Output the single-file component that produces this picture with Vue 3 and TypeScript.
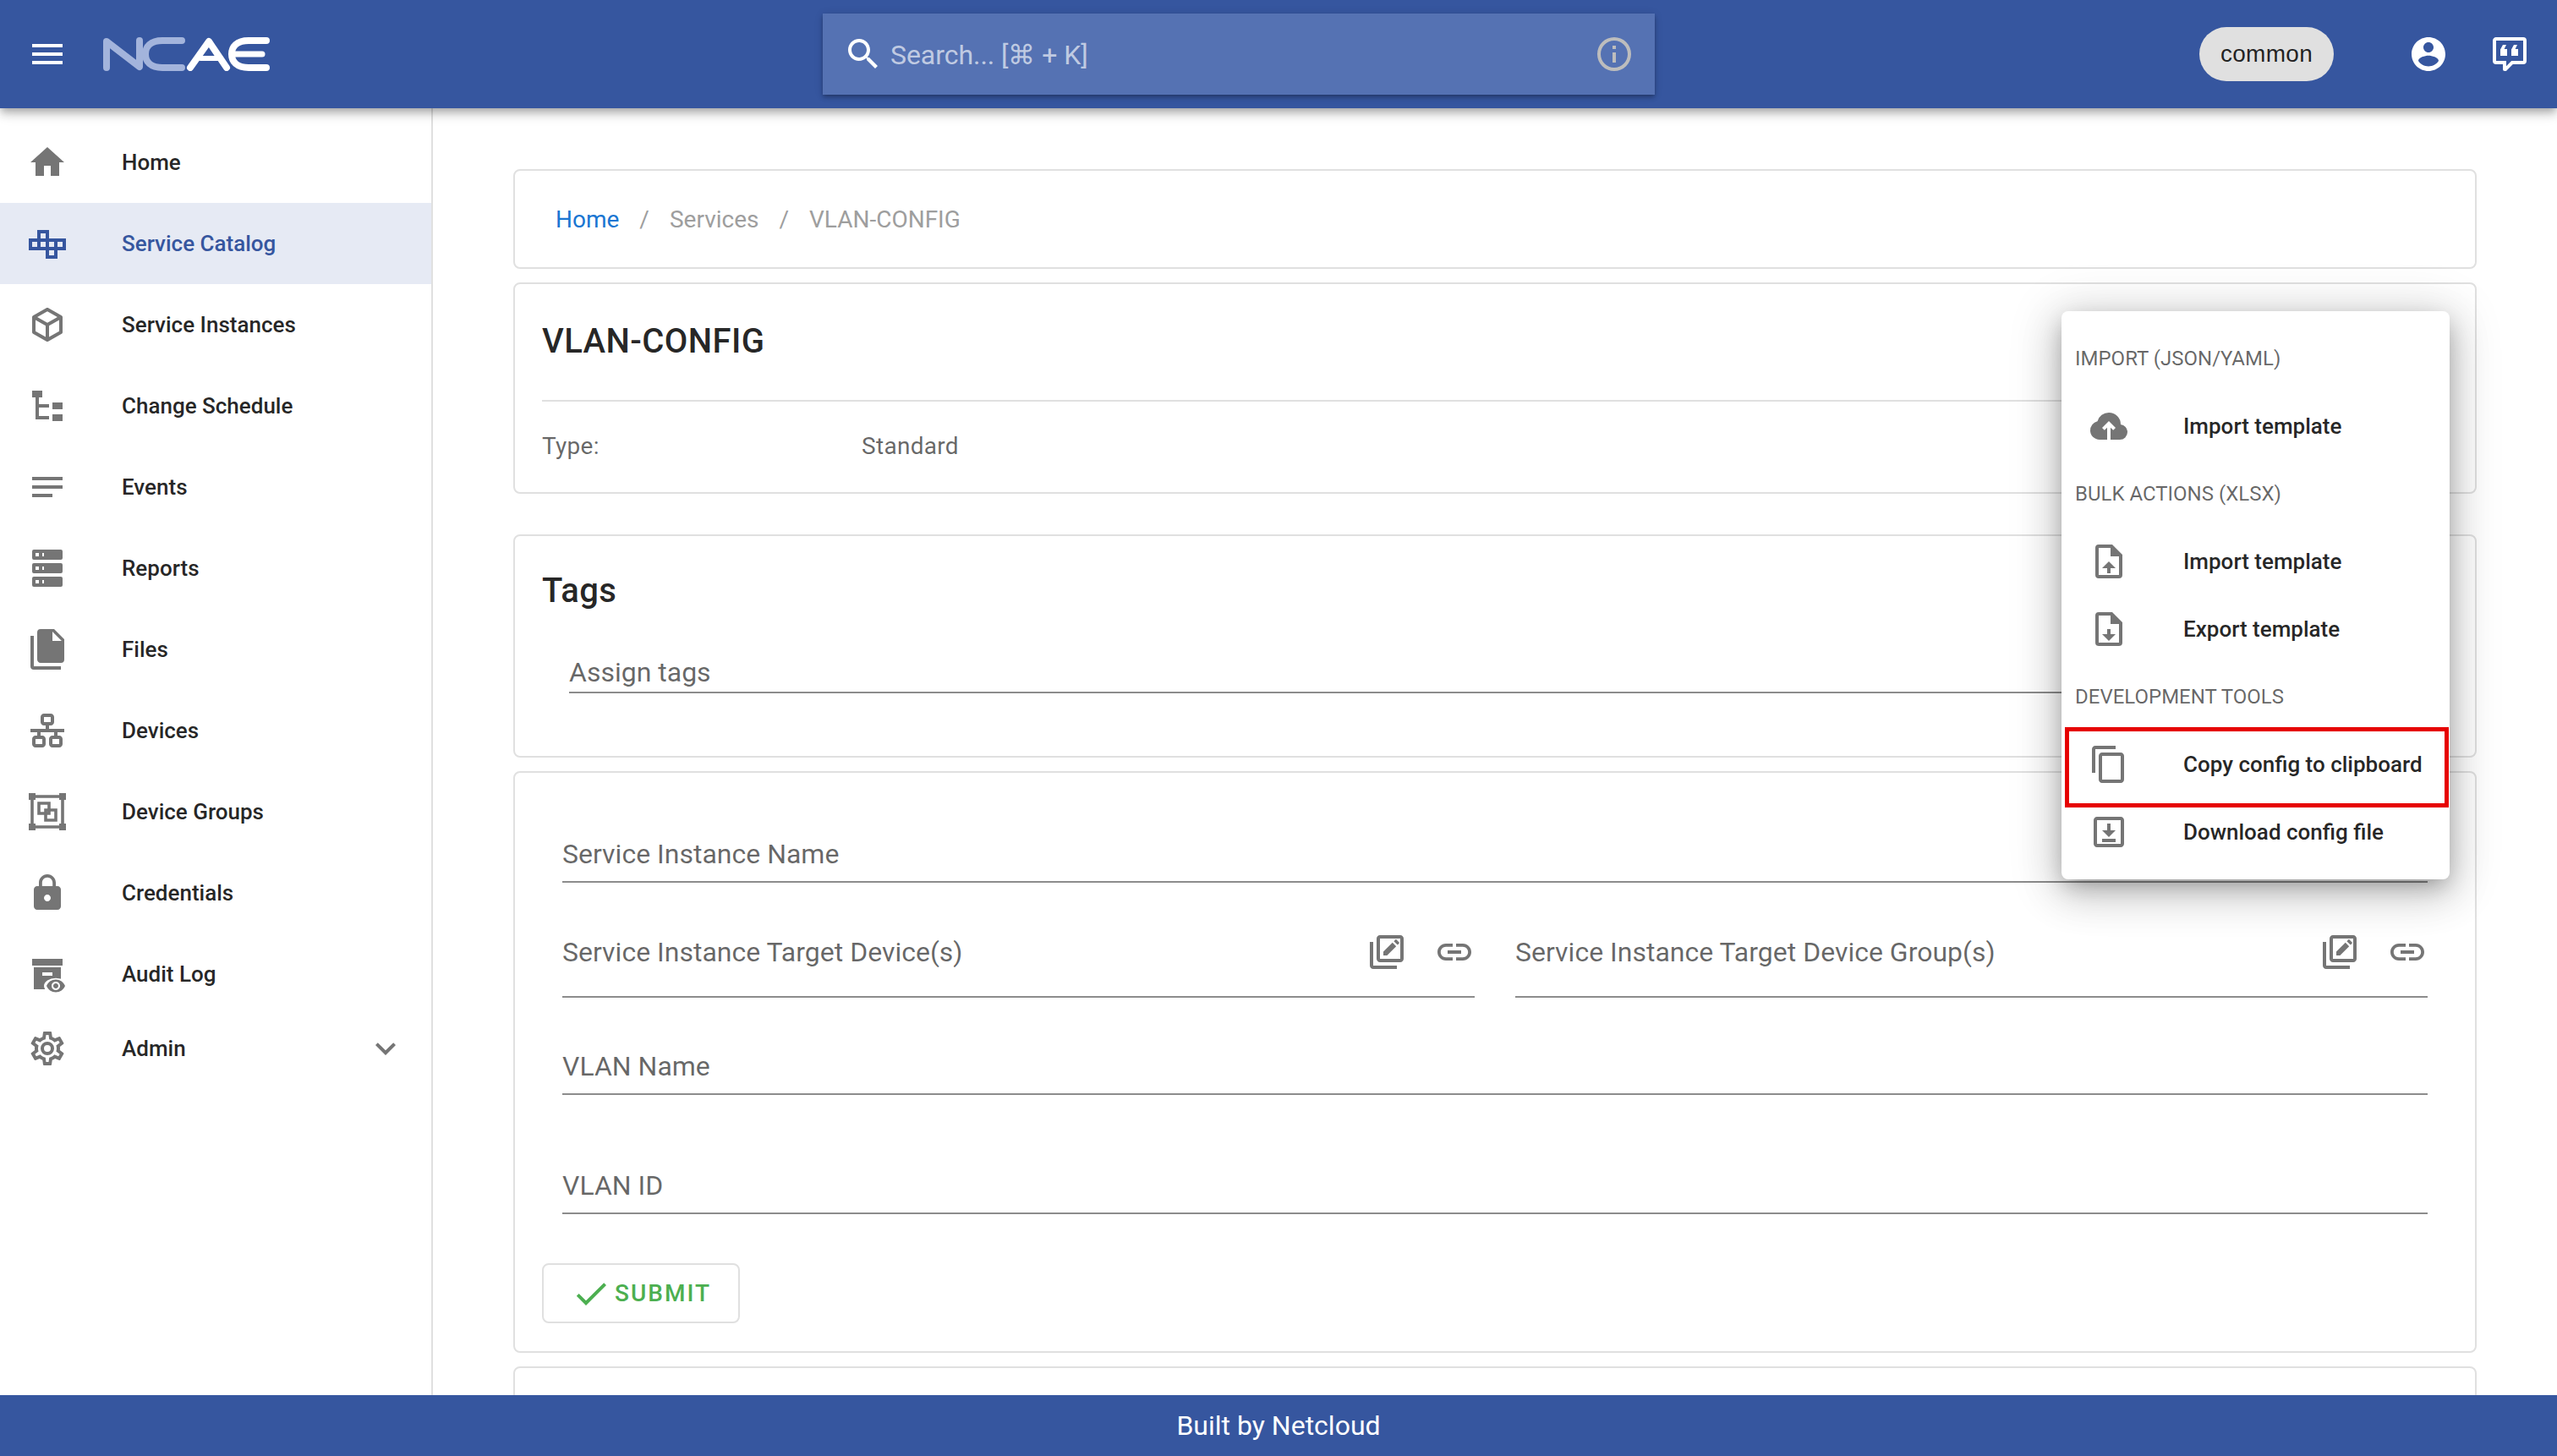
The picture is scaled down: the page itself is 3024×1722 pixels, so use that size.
<script setup lang="ts">
interface NavItem {
  key: string
  label: string
  path?: string
  active?: boolean
  expand?: boolean
}

interface MenuItem {
  label: string
  path: string
  highlight?: boolean
}

interface MenuGroup {
  title: string
  items: MenuItem[]
}

const arrowUp = 'M12 12l-4 4h3v3h2v-3h3z'
const arrowDown = 'M12 19l4-4h-3v-3h-2v3H8z'
const fileOutline = 'M14 2H6a2 2 0 0 0-2 2v16a2 2 0 0 0 2 2h12a2 2 0 0 0 2-2V8zM18 20H6V4h7v5h5z'

const navItems: NavItem[] = [
  { key: 'home', label: 'Home', path: 'M10 20v-6h4v6h5v-8h3L12 3 2 12h3v8z' },
  { key: 'catalog', label: 'Service Catalog', active: true },
  {
    key: 'instances',
    label: 'Service Instances',
    path: 'M21,16.5C21,16.88 20.79,17.21 20.47,17.38L12.57,21.82C12.41,21.94 12.21,22 12,22C11.79,22 11.59,21.94 11.43,21.82L3.53,17.38C3.21,17.21 3,16.88 3,16.5V7.5C3,7.12 3.21,6.79 3.53,6.62L11.43,2.18C11.59,2.06 11.79,2 12,2C12.21,2 12.41,2.06 12.57,2.18L20.47,6.62C20.79,6.79 21,7.12 21,7.5V16.5M12,4.15L6.04,7.5L12,10.85L17.96,7.5L12,4.15M5,15.91L11,19.29V12.58L5,9.21V15.91M19,15.91V9.21L13,12.58V19.29L19,15.91Z'
  },
  {
    key: 'schedule',
    label: 'Change Schedule',
    path: 'M3 3h6v4H3zM5 7h2v4h6v2H7v5h6v2H5zM15 10h6v4h-6zM15 17h6v4h-6z'
  },
  { key: 'events', label: 'Events', path: 'M3 18h12v-2H3v2zM3 6v2h18V6H3zm0 7h18v-2H3v2z' },
  {
    key: 'reports',
    label: 'Reports',
    path: 'M4 1h16a1 1 0 0 1 1 1v4a1 1 0 0 1-1 1H4a1 1 0 0 1-1-1V2a1 1 0 0 1 1-1zM5 3v2h2V3zM9 3v2h1V3zM4 9h16a1 1 0 0 1 1 1v4a1 1 0 0 1-1 1H4a1 1 0 0 1-1-1v-4a1 1 0 0 1 1-1zM5 11v2h2v-2zM9 11v2h1v-2zM4 17h16a1 1 0 0 1 1 1v4a1 1 0 0 1-1 1H4a1 1 0 0 1-1-1v-4a1 1 0 0 1 1-1zM5 19v2h2v-2zM9 19v2h1v-2z'
  },
  {
    key: 'files',
    label: 'Files',
    path: 'M15,7H20.5L15,1.5V7M8,0H16L22,6V18A2,2 0 0,1 20,20H8C6.89,20 6,19.1 6,18V2A2,2 0 0,1 8,0M4,4V22H20V24H4A2,2 0 0,1 2,22V4H4Z'
  },
  {
    key: 'devices',
    label: 'Devices',
    path: 'M10,2C8.89,2 8,2.89 8,4V7C8,8.11 8.89,9 10,9H11V11H2V13H6V15H5C3.89,15 3,15.89 3,17V20C3,21.11 3.89,22 5,22H9C10.11,22 11,21.11 11,20V17C11,15.89 10.11,15 9,15H8V13H16V15H15C13.89,15 13,15.89 13,17V20C13,21.11 13.89,22 15,22H19C20.11,22 21,21.11 21,20V17C21,15.89 20.11,15 19,15H18V13H22V11H13V9H14C15.11,9 16,8.11 16,7V4C16,2.89 15.11,2 14,2H10M10,4H14V7H10V4M5,17H9V20H5V17M15,17H19V20H15V17Z'
  },
  { key: 'groups', label: 'Device Groups' },
  {
    key: 'credentials',
    label: 'Credentials',
    path: 'M18 8h-1V6c0-2.76-2.24-5-5-5S7 3.24 7 6v2H6c-1.1 0-2 .9-2 2v10c0 1.1.9 2 2 2h12c1.1 0 2-.9 2-2V10c0-1.1-.9-2-2-2zm-6 9c-1.1 0-2-.9-2-2s.9-2 2-2 2 .9 2 2-.9 2-2 2zm3.1-9H8.9V6c0-1.71 1.39-3.1 3.1-3.1 1.71 0 3.1 1.39 3.1 3.1v2z'
  },
  { key: 'audit', label: 'Audit Log' },
  {
    key: 'admin',
    label: 'Admin',
    expand: true,
    path: 'M12,8A4,4 0 0,1 16,12A4,4 0 0,1 12,16A4,4 0 0,1 8,12A4,4 0 0,1 12,8M12,10A2,2 0 0,0 10,12A2,2 0 0,0 12,14A2,2 0 0,0 14,12A2,2 0 0,0 12,10M10,22C9.75,22 9.54,21.82 9.5,21.58L9.13,18.93C8.5,18.68 7.96,18.34 7.44,17.94L4.95,18.95C4.73,19.03 4.46,18.95 4.34,18.73L2.34,15.27C2.21,15.05 2.27,14.78 2.46,14.63L4.57,12.97L4.5,12L4.57,11L2.46,9.37C2.27,9.22 2.21,8.95 2.34,8.73L4.34,5.27C4.46,5.05 4.73,4.96 4.95,5.05L7.44,6.05C7.96,5.66 8.5,5.32 9.13,5.07L9.5,2.42C9.54,2.18 9.75,2 10,2H14C14.25,2 14.46,2.18 14.5,2.42L14.87,5.07C15.5,5.32 16.04,5.66 16.56,6.05L19.05,5.05C19.27,4.96 19.54,5.05 19.66,5.27L21.66,8.73C21.79,8.95 21.73,9.22 21.54,9.37L19.43,11L19.5,12L19.43,13L21.54,14.63C21.73,14.78 21.79,15.05 21.66,15.27L19.66,18.73C19.54,18.95 19.27,19.04 19.05,18.95L16.56,17.95C16.04,18.34 15.5,18.68 14.87,18.93L14.5,21.58C14.46,21.82 14.25,22 14,22H10M11.25,4L10.88,6.61C9.68,6.86 8.62,7.5 7.85,8.39L5.44,7.35L4.69,8.65L6.8,10.2C6.4,11.37 6.4,12.64 6.8,13.8L4.68,15.36L5.43,16.66L7.86,15.62C8.63,16.5 9.68,17.14 10.87,17.38L11.24,20H12.76L13.13,17.39C14.32,17.14 15.37,16.5 16.14,15.62L18.57,16.66L19.32,15.36L17.2,13.81C17.6,12.64 17.6,11.37 17.2,10.2L19.31,8.65L18.56,7.35L16.15,8.39C15.38,7.5 14.32,6.86 13.12,6.62L12.75,4H11.25Z'
  }
]

const menuGroups: MenuGroup[] = [
  {
    title: 'IMPORT (JSON/YAML)',
    items: [
      {
        label: 'Import template',
        path: 'M11 20H6.5q-2.28 0-3.89-1.57Q1 16.85 1 14.58q0-1.95 1.17-3.48 1.18-1.53 3.08-1.95.63-2.3 2.5-3.72Q9.63 4 12 4q2.93 0 4.96 2.04Q19 8.07 19 11q1.73.2 2.86 1.5 1.14 1.28 1.14 3 0 1.88-1.31 3.19T18.5 20H13v-7.15l1.6 1.55L16 13l-4-4-4 4 1.4 1.4 1.6-1.55Z'
      }
    ]
  },
  {
    title: 'BULK ACTIONS (XLSX)',
    items: [
      { label: 'Import template', path: fileOutline + arrowUp },
      { label: 'Export template', path: fileOutline + arrowDown }
    ]
  },
  {
    title: 'DEVELOPMENT TOOLS',
    items: [
      {
        label: 'Copy config to clipboard',
        highlight: true,
        path: 'M16 1H4c-1.1 0-2 .9-2 2v14h2V3h12V1zm3 4H8c-1.1 0-2 .9-2 2v14c0 1.1.9 2 2 2h11c1.1 0 2-.9 2-2V7c0-1.1-.9-2-2-2zm0 16H8V7h11v14z'
      },
      {
        label: 'Download config file',
        path: 'M19 3H5C3.9 3 3 3.9 3 5v14c0 1.1.9 2 2 2h14c1.1 0 2-.9 2-2V5C21 3.9 20.1 3 19 3M19 19H5V5h14V19M16 11h-3V7h-2v4H8l4 4zM8 16h8v2H8z'
      }
    ]
  }
]

const editPath =
  'M4 6H2v14c0 1.1.9 2 2 2h14v-2H4V6zM20 2H8c-1.1 0-2 .9-2 2v12c0 1.1.9 2 2 2h12c1.1 0 2-.9 2-2V4c0-1.1-.9-2-2-2zm0 14H8V4h12v12zM10 14v-2.2l5.4-5.4 2.2 2.2-5.4 5.4zM16.2 5.6l.9-.9c.2-.2.5-.2.7 0l1.5 1.5c.2.2.2.5 0 .7l-.9.9z'
const linkPath =
  'M3.9 12c0-1.71 1.39-3.1 3.1-3.1h4V7H7c-2.76 0-5 2.24-5 5s2.24 5 5 5h4v-1.9H7c-1.71 0-3.1-1.39-3.1-3.1zM8 13h8v-2H8v2zm9-6h-4v1.9h4c1.71 0 3.1 1.39 3.1 3.1s-1.39 3.1-3.1 3.1h-4V17h4c2.76 0 5-2.24 5-5s-2.24-5-5-5z'

const targets = ['Service Instance Target Device(s)', 'Service Instance Target Device Group(s)']
</script>

<template>
  <div class="app">
    <header class="topbar">
      <svg class="icon" viewBox="0 0 24 24" fill="#fff"><path d="M3 18h18v-2H3v2zm0-5h18v-2H3v2zm0-7v2h18V6H3z" /></svg>
      <svg class="logo" viewBox="0 0 197 40" fill="none" stroke-width="8" stroke-linecap="round" stroke-linejoin="round">
        <g stroke="#a3b4dc">
          <path d="M4 36V5L43 35V4" />
          <path d="M93 4H70C56 4 50 11 50 20s6 16 20 16H93" />
        </g>
        <g stroke="#fff">
          <path d="M103 36L125 5L146 36" />
          <path d="M115 25H136" stroke-width="6" />
          <path d="M193 4H172C158 4 152 11 152 20s6 16 20 16H193" />
          <path d="M156 20H188" stroke-width="7" />
        </g>
      </svg>
      <div class="search">
        <svg class="icon" viewBox="0 0 24 24" fill="#fff"><path d="M15.5 14h-.79l-.28-.27C15.41 12.59 16 11.11 16 9.5 16 5.91 13.09 3 9.5 3S3 5.91 3 9.5 5.91 16 9.5 16c1.61 0 3.09-.59 4.23-1.57l.27.28v.79l5 4.99L20.49 19l-4.99-5zm-6 0C7.01 14 5 11.99 5 9.5S7.01 5 9.5 5 14 7.01 14 9.5 11.99 14 9.5 14z" /></svg>
        <span class="search-text">Search... [⌘ + K]</span>
        <svg class="icon" viewBox="0 0 24 24" fill="#bdbdbd"><path d="M11,9H13V7H11M12,20C7.59,20 4,16.41 4,12C4,7.59 7.59,4 12,4C16.41,4 20,7.59 20,12C20,16.41 16.41,20 12,20M12,2A10,10 0 0,0 2,12A10,10 0 0,0 12,22A10,10 0 0,0 22,12A10,10 0 0,0 12,2M11,17H13V11H11V17Z" /></svg>
      </div>
      <div class="chip">common</div>
      <svg class="icon user" viewBox="0 0 24 24" fill="#fff"><path d="M12 2C6.48 2 2 6.48 2 12s4.48 10 10 10 10-4.48 10-10S17.52 2 12 2zm0 3c1.66 0 3 1.34 3 3s-1.34 3-3 3-3-1.34-3-3 1.34-3 3-3zm0 14.2c-2.5 0-4.71-1.28-6-3.22.03-1.99 4-3.08 6-3.08 1.99 0 5.97 1.09 6 3.08-1.29 1.94-3.5 3.22-6 3.22z" /></svg>
      <svg class="icon feedback" viewBox="0 0 24 24" fill="#fff"><path d="M9 22a1 1 0 0 1-1-1v-3H4a2 2 0 0 1-2-2V4c0-1.11.9-2 2-2h16a2 2 0 0 1 2 2v12a2 2 0 0 1-2 2h-6.1l-3.7 3.71c-.2.19-.45.29-.7.29zM10 16v3.08L13.08 16H20V4H4v12zM10 6.5L8.8 9H10.5v4H6.5V9.2L8 6.5zM16.5 6.5L15.3 9H17v4h-4V9.2L14.5 6.5z" /></svg>
    </header>

    <div class="body">
      <nav class="sidebar">
        <div
          v-for="item in navItems"
          :key="item.key"
          class="nav-item"
          :class="{ active: item.active, admin: item.expand }"
        >
          <svg class="icon" viewBox="0 0 24 24" fill="currentColor">
            <path v-if="item.path" :d="item.path" fill-rule="evenodd" />
            <path
              v-else-if="item.key === 'catalog'"
              d="M7 5h5v5H7zM2 10h5v5H2zM7 10h5v5H7zM12 10h5v5h-5zM17 10h5v5h-5zM12 15h5v5h-5z"
              fill="none"
              stroke="currentColor"
              stroke-width="2"
            />
            <template v-else-if="item.key === 'groups'">
              <path d="M1 1h4v4H1zM19 1h4v4h-4zM1 19h4v4H1zM19 19h4v4h-4z" />
              <path d="M3 3h18v18H3zM7 7h6v6H7zM11 11h6v6h-6z" fill="none" stroke="currentColor" stroke-width="1.8" />
            </template>
            <template v-else-if="item.key === 'audit'">
              <path d="M3 3h18v4H3zM4 8h16v13H4z" />
              <path d="M9 11h6v2H9z" fill="#fff" />
              <ellipse cx="17" cy="19" rx="7" ry="4.6" fill="#fff" />
              <path transform="translate(11 13) scale(.5)" d="M12 4.5C7 4.5 2.73 7.61 1 12c1.73 4.39 6 7.5 11 7.5s9.27-3.11 11-7.5c-1.73-4.39-6-7.5-11-7.5zM12 17c-2.76 0-5-2.24-5-5s2.24-5 5-5 5 2.24 5 5-2.24 5-5 5zm0-8c-1.66 0-3 1.34-3 3s1.34 3 3 3 3-1.34 3-3-1.34-3-3-3z" />
            </template>
          </svg>
          <span class="nav-label">{{ item.label }}</span>
          <svg v-if="item.expand" class="icon chevron" viewBox="0 0 24 24" fill="currentColor"><path d="M7.41 8.59L12 13.17l4.59-4.58L18 10l-6 6-6-6 1.41-1.41z" /></svg>
        </div>
      </nav>

      <main class="main">
        <div class="page">
          <section class="card crumbs">
            <span class="crumb-link">Home</span>
            <span class="crumb-sep">/</span>
            <span>Services</span>
            <span class="crumb-sep">/</span>
            <span>VLAN-CONFIG</span>
          </section>

          <section class="card summary">
            <h1 class="title">VLAN-CONFIG</h1>
            <div class="summary-row">
              <span class="summary-key">Type:</span>
              <span>Standard</span>
            </div>
          </section>

          <section class="card tags">
            <h2 class="title">Tags</h2>
            <div class="field tag-field">Assign tags</div>
          </section>

          <section class="card form">
            <div class="field">Service Instance Name</div>
            <div class="target-row">
              <div v-for="t in targets" :key="t" class="field target">
                <span>{{ t }}</span>
                <span class="target-icons">
                  <svg class="icon" viewBox="0 0 24 24" fill="#757575"><path :d="editPath" /></svg>
                  <svg class="icon" viewBox="0 0 24 24" fill="#757575"><path :d="linkPath" /></svg>
                </span>
              </div>
            </div>
            <div class="field vlan-name">VLAN Name</div>
            <div class="field vlan-id">VLAN ID</div>
            <button class="submit" type="button">
              <svg class="icon" viewBox="0 0 24 24" fill="#4caf50"><path d="M9 16.17L4.83 12l-1.42 1.41L9 19 21 7l-1.41-1.41z" /></svg>
              SUBMIT
            </button>
          </section>

          <section class="card tail"></section>

          <div class="menu">
            <template v-for="group in menuGroups" :key="group.title">
              <div class="menu-title">{{ group.title }}</div>
              <div v-for="item in group.items" :key="item.label + group.title" class="menu-item">
                <svg class="icon" viewBox="0 0 24 24" fill="#757575"><path :d="item.path" /></svg>
                <span>{{ item.label }}</span>
                <span v-if="item.highlight" class="highlight"></span>
              </div>
            </template>
          </div>
        </div>
      </main>
    </div>

    <footer class="footer">Built by Netcloud</footer>
  </div>
</template>

<style>
html,
body {
  margin: 0;
  background: #fff;
}
</style>

<style scoped>
.app {
  width: 3024px;
  height: 1722px;
  display: flex;
  flex-direction: column;
  overflow: hidden;
  font-family: Roboto, "Liberation Sans", sans-serif;
  color: rgba(0, 0, 0, 0.87);
}

.icon {
  width: 48px;
  height: 48px;
  flex-shrink: 0;
  display: block;
}

.topbar {
  height: 128px;
  flex-shrink: 0;
  display: flex;
  align-items: center;
  padding: 0 32px;
  box-sizing: border-box;
  background: #36569f;
  box-shadow: 0 4px 8px -2px rgba(0, 0, 0, 0.2), 0 8px 10px 0 rgba(0, 0, 0, 0.14), 0 2px 20px 0 rgba(0, 0, 0, 0.12);
  position: relative;
  z-index: 2;
}

.logo {
  width: 197px;
  height: 40px;
  margin-left: 42px;
}

.search {
  width: 984px;
  height: 96px;
  margin-left: 654px;
  padding: 0 24px;
  box-sizing: border-box;
  display: flex;
  align-items: center;
  background: #5572b3;
  box-shadow: 0 2px 4px -1px rgba(0, 0, 0, 0.2), 0 4px 5px 0 rgba(0, 0, 0, 0.14), 0 1px 10px 0 rgba(0, 0, 0, 0.12);
}

.search-text {
  flex: 1;
  margin-left: 8px;
  padding-top: 2px;
  font-size: 32px;
  letter-spacing: -0.05px;
  color: rgba(255, 255, 255, 0.65);
}

.chip {
  margin-left: auto;
  width: 159px;
  height: 64px;
  border-radius: 32px;
  background: #e0e0e0;
  display: flex;
  align-items: center;
  justify-content: center;
  font-family: "Liberation Sans", sans-serif;
  font-size: 28px;
  letter-spacing: 0.3px;
}

.user {
  margin-left: 88px;
}

.feedback {
  margin-left: 48px;
}

.body {
  flex: 1;
  display: flex;
  min-height: 0;
}

.sidebar {
  width: 512px;
  flex-shrink: 0;
  padding-top: 16px;
  box-sizing: border-box;
  border-right: 2px solid #e0e0e0;
}

.nav-item {
  height: 96px;
  display: flex;
  align-items: center;
  gap: 64px;
  padding-left: 32px;
  color: #757575;
}

.nav-item.admin {
  height: 80px;
}

.nav-item.active {
  background: #e6eaf4;
  color: #36569f;
}

.nav-label {
  font-size: 26px;
  font-weight: 500;
  color: rgba(0, 0, 0, 0.87);
}

.active .nav-label {
  color: #36569f;
}

.chevron {
  margin-left: auto;
  margin-right: 30px;
}

.main {
  flex: 1;
  min-width: 0;
  padding: 72px 95px 0;
  overflow: hidden;
}

.page {
  position: relative;
}

.card {
  border: 2px solid #e0e0e0;
  border-radius: 8px;
  box-sizing: border-box;
  margin-bottom: 16px;
}

.crumbs {
  height: 118px;
  display: flex;
  align-items: center;
  padding-left: 48px;
  font-size: 28px;
  color: #9e9e9e;
}

.crumb-link {
  color: #1976d2;
}

.crumb-sep {
  margin: 0 24px;
}

.summary {
  height: 250px;
  padding: 0 32px;
  margin-bottom: 48px;
}

.title {
  margin: 0;
  font-size: 40px;
  font-weight: 500;
  letter-spacing: 0.4px;
  line-height: 48px;
}

.summary .title {
  padding: 44px 0 45px;
  border-bottom: 2px solid #e0e0e0;
}

.summary-row {
  display: flex;
  margin-top: 36px;
  font-size: 28px;
  letter-spacing: 0.3px;
  color: rgba(0, 0, 0, 0.6);
}

.summary-key {
  width: 378px;
}

.tags {
  height: 264px;
  padding: 41px 56px 0 32px;
}

.field {
  height: 66px;
  box-sizing: border-box;
  line-height: 64px;
  font-size: 32px;
  color: rgba(0, 0, 0, 0.6);
  border-bottom: 2px solid #8c8c8c;
}

.tag-field {
  height: 48px;
  line-height: 46px;
  margin: 49px 0 0 32px;
}

.form {
  height: 688px;
  padding: 64px 56px 0 32px;
}

.form .field {
  margin-left: 24px;
}

.target-row {
  display: grid;
  grid-template-columns: 1fr 1fr;
  gap: 48px;
  margin: 50px 0 0 24px;
}

.form .target {
  margin-left: 0;
  height: 86px;
  display: flex;
  align-items: flex-start;
  justify-content: space-between;
}

.target-icons {
  display: flex;
  gap: 32px;
  padding-top: 8px;
}

.vlan-name {
  margin-top: 49px;
}

.vlan-id {
  margin-top: 75px;
}

.submit {
  margin-top: 58px;
  width: 234px;
  height: 71px;
  padding: 0;
  display: flex;
  align-items: center;
  justify-content: center;
  gap: 4px;
  background: #fff;
  border: 2px solid #e0e0e0;
  border-radius: 8px;
  font-family: inherit;
  font-size: 28px;
  font-weight: 500;
  letter-spacing: 2px;
  color: #4caf50;
}

.tail {
  height: 100px;
}

.menu {
  position: absolute;
  top: 168px;
  right: 32px;
  width: 459px;
  padding: 16px 0;
  box-sizing: border-box;
  background: #fff;
  border-radius: 8px;
  box-shadow: 0 10px 26px -6px rgba(0, 0, 0, 0.3), 0 16px 48px 4px rgba(0, 0, 0, 0.14), 0 6px 58px 10px rgba(0, 0, 0, 0.12);
}

.menu-title {
  height: 80px;
  line-height: 80px;
  padding-left: 16px;
  font-size: 24px;
  color: rgba(0, 0, 0, 0.6);
}

.menu-item {
  position: relative;
  height: 80px;
  display: flex;
  align-items: center;
  gap: 64px;
  padding-left: 32px;
  font-size: 26px;
  font-weight: 500;
}

.highlight {
  position: absolute;
  left: 4px;
  right: 1px;
  top: -4px;
  bottom: -11px;
  border: 5px solid #e60000;
}

.footer {
  height: 72px;
  flex-shrink: 0;
  position: relative;
  z-index: 2;
  display: flex;
  align-items: center;
  justify-content: center;
  background: #36569f;
  color: #fff;
  font-size: 32px;
}
</style>
